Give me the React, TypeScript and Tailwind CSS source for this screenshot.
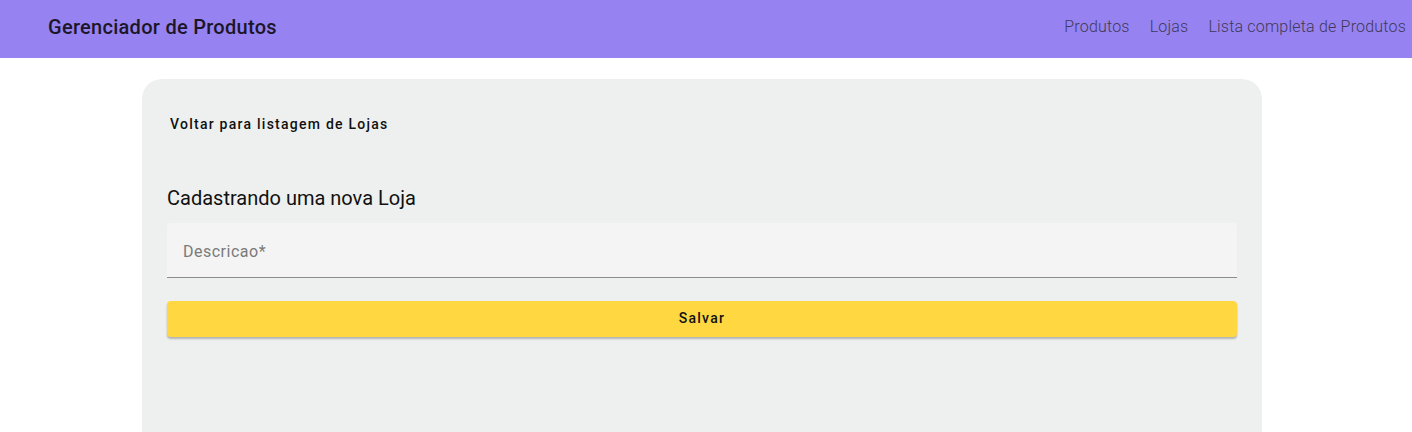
const App = () => {
  return (
    <div className="min-h-screen bg-white font-['Roboto',sans-serif]">
      <header className="h-[58px] bg-[#9683f1] flex items-center justify-between pl-[48px] pr-[6px] pb-[4px]">
        <h1 className="text-[20px] font-medium text-[#1c1629] tracking-[0.28px]">
          Gerenciador de Produtos
        </h1>
        <nav className="flex items-center gap-[20px] text-[16px] font-light text-[#40395a] tracking-[0.2px]">
          <a>Produtos</a>
          <a>Lojas</a>
          <a>Lista completa de Produtos</a>
        </nav>
      </header>
      <div className="pt-[21px] pl-[142px]">
        <div className="w-[1120px] h-[360px] bg-[#eef0ef] rounded-t-[20px] px-[25px] pt-[32px]">
          <button className="h-[26px] px-[3px] text-[14px] font-medium tracking-[1.25px] text-[#111]">
            Voltar para listagem de Lojas
          </button>
          <h2 className="mt-[47px] text-[20px] text-[#111] leading-[28px]">
            Cadastrando uma nova Loja
          </h2>
          <div className="mt-[11px] h-[55px] bg-[#f4f4f4] rounded-t-[4px] border-b border-[#8c8c8c] flex items-center px-[16px] pt-[4px]">
            <span className="text-[16px] text-[#7a7a7a] tracking-[0.5px]">Descricao*</span>
          </div>
          <button className="mt-[23px] w-full h-[36px] bg-[#ffd740] rounded-[4px] shadow-[0_2px_2px_rgba(0,0,0,0.25)] text-[14px] font-medium tracking-[1.25px] text-[#111] pb-[2px]">
            Salvar
          </button>
        </div>
      </div>
    </div>
  );
};

export default App;
